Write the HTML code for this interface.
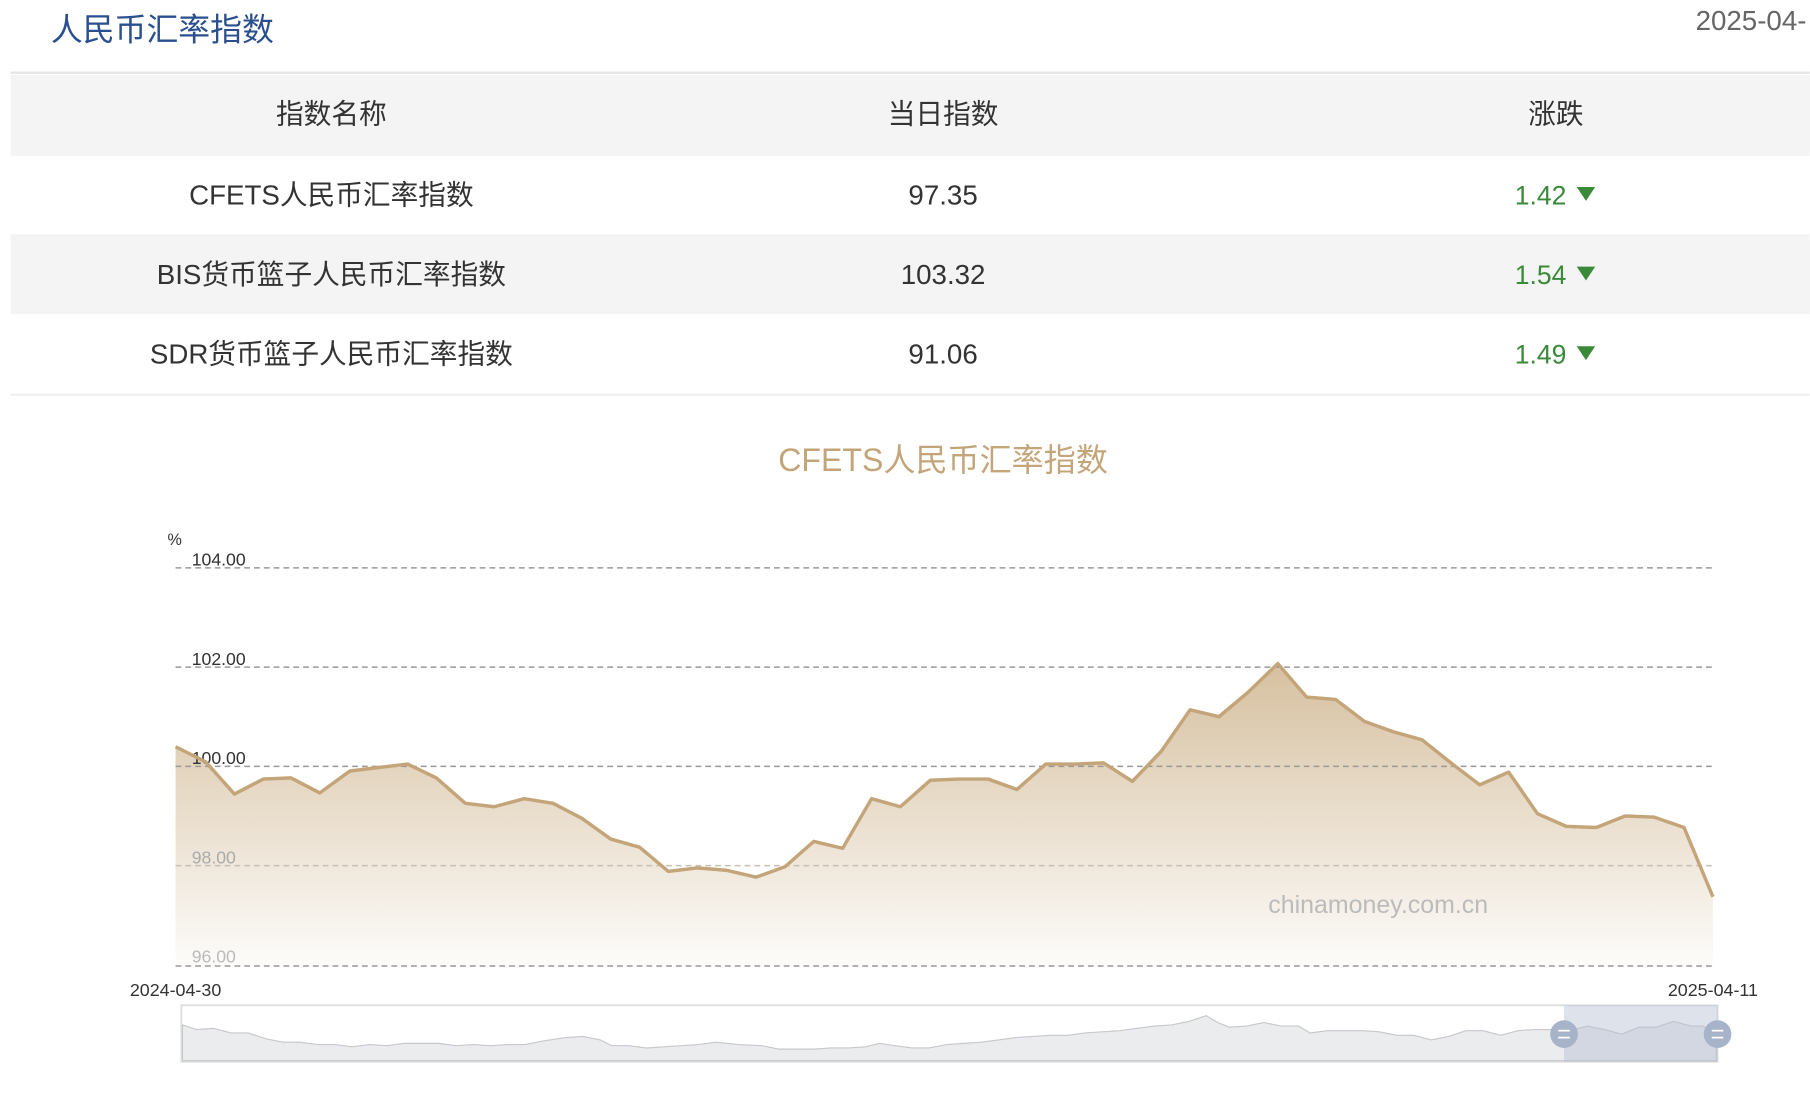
<!DOCTYPE html>
<html><head><meta charset="utf-8"><style>
html,body{margin:0;padding:0;background:#fff;width:1810px;height:1108px;overflow:hidden}
svg{display:block}
text{font-family:"Liberation Sans","Noto Sans CJK SC",sans-serif}
</style></head><body>
<svg width="1810" height="1108" viewBox="0 0 1568 960" xmlns="http://www.w3.org/2000/svg">
<defs>
<linearGradient id="g" x1="0" y1="0" x2="0" y2="1">
<stop offset="0" stop-color="#d4bd9b" stop-opacity="0.95"/>
<stop offset="1" stop-color="#d4bd9b" stop-opacity="0.05"/>
</linearGradient>
</defs>
<text x="44" y="35" font-size="27.6" fill="#2a4f8f">人民币汇率指数</text>
<text x="1469" y="26" font-size="24" fill="#666">2025-04-</text>
<rect x="9" y="62" width="1559" height="2" fill="#e6e6e6"/>
<rect x="9" y="65" width="1559" height="70" fill="#f4f4f4"/>
<rect x="9" y="203" width="1559" height="69" fill="#f4f4f4"/>
<rect x="9" y="341" width="1559" height="2" fill="#f0f0f0"/>
<g font-size="24" fill="#333" text-anchor="middle">
<text x="287" y="107">指数名称</text><text x="817" y="107">当日指数</text><text x="1348" y="107">涨跌</text>
<text x="287" y="177">CFETS人民币汇率指数</text><text x="817" y="177">97.35</text>
<text x="287" y="246">BIS货币篮子人民币汇率指数</text><text x="817" y="246">103.32</text>
<text x="287" y="315">SDR货币篮子人民币汇率指数</text><text x="817" y="315">91.06</text>
</g>
<g font-size="23" fill="#3a8a3a" text-anchor="end">
<text x="1357" y="177">1.42</text><text x="1357" y="246">1.54</text><text x="1357" y="315">1.49</text>
</g>
<g fill="#3a8a3a">
<path d="M1366 162h16l-8 12z"/><path d="M1366 231h16l-8 12z"/><path d="M1366 300h16l-8 12z"/>
</g>
<text x="817" y="408" font-size="27.8" fill="#c4a57a" text-anchor="middle">CFETS人民币汇率指数</text>
<text x="145" y="472" font-size="14" fill="#333">%</text>
<path d="M152 647L178 660L203 688L228 675L252 674L277 687L303 668L328 665L353 662L378 674L403 696L428 699L454 692L479 696L504 709L529 727L554 734L579 755L604 752L629 754L655 760L680 751L705 729L730 735L755 692L780 699L806 676L831 675L856 675L881 684L906 662L931 662L956 661L981 677L1006 651L1031 615L1056 621L1081 600L1107 575L1132 604L1157 606L1182 625L1207 634L1232 641L1257 661L1282 680L1307 669L1332 705L1357 716L1383 717L1408 707L1433 708L1459 717L1484 777L1484 837L152 837Z" fill="url(#g)"/>
<g stroke="#999" stroke-width="1.3" stroke-dasharray="5 3.5">
<line x1="152" y1="492" x2="1484" y2="492"/><line x1="152" y1="578" x2="1484" y2="578"/><line x1="152" y1="664" x2="1484" y2="664"/><line x1="152" y1="750" x2="1484" y2="750" stroke="#c8bfb3"/><line x1="152" y1="837" x2="1484" y2="837"/>
</g>
<g font-size="15.3">
<text x="166" y="490" fill="#333">104.00</text><text x="166" y="576" fill="#333">102.00</text><text x="166" y="662" fill="#333">100.00</text><text x="166" y="748" fill="#aaa">98.00</text><text x="166" y="834" fill="#bbb">96.00</text>
</g>
<path d="M152 647L178 660L203 688L228 675L252 674L277 687L303 668L328 665L353 662L378 674L403 696L428 699L454 692L479 696L504 709L529 727L554 734L579 755L604 752L629 754L655 760L680 751L705 729L730 735L755 692L780 699L806 676L831 675L856 675L881 684L906 662L931 662L956 661L981 677L1006 651L1031 615L1056 621L1081 600L1107 575L1132 604L1157 606L1182 625L1207 634L1232 641L1257 661L1282 680L1307 669L1332 705L1357 716L1383 717L1408 707L1433 708L1459 717L1484 777" fill="none" stroke="#c4a57a" stroke-width="3" stroke-linejoin="round"/>
<text x="1194" y="791" font-size="21.6" fill="#bbb" text-anchor="middle">chinamoney.com.cn</text>
<g font-size="15.5" fill="#333" text-anchor="middle"><text x="152" y="863">2024-04-30</text><text x="1484" y="863">2025-04-11</text></g>
<rect x="157" y="871" width="1331" height="49" fill="#fff" stroke="#ddd" stroke-width="1.5"/>
<path d="M158 888L170 892L185 891L200 895L215 895L230 900L245 903L260 903L275 905L290 905L305 907L320 905L335 906L350 904L365 904L380 904L395 906L410 905L425 906L440 905L455 905L470 902L490 899L505 898L520 901L530 906L545 906L560 908L575 907L590 906L605 905L620 903L640 905L660 906L675 909L690 909L705 909L720 908L735 908L750 907L762 904L775 906L790 908L805 908L820 905L835 904L850 903L865 901L880 899L895 898L910 897L925 897L940 895L955 894L970 893L985 891L1000 889L1015 888L1030 885L1045 880L1055 886L1065 890L1080 889L1095 886L1110 889L1125 889L1135 895L1150 893L1165 893L1180 893L1195 894L1210 897L1225 897L1240 901L1255 898L1270 893L1285 893L1300 897L1315 893L1330 892L1345 892L1360 893L1375 889L1390 892L1405 896L1420 890L1435 890L1450 885L1465 889L1475 889L1487 895L1487 919L158 919Z" fill="#ebecee" stroke="#c8c8cc" stroke-width="1"/>
<rect x="1355" y="871" width="133" height="49" fill="#b4bfd2" fill-opacity="0.45"/>
<circle cx="1355" cy="896" r="12" fill="#a7b3c9"/><circle cx="1488" cy="896" r="12" fill="#a7b3c9"/>
<g stroke="#fff" stroke-width="1.5"><line x1="1350" y1="893" x2="1360" y2="893"/><line x1="1350" y1="899" x2="1360" y2="899"/><line x1="1483" y1="893" x2="1493" y2="893"/><line x1="1483" y1="899" x2="1493" y2="899"/></g>
</svg>
</body></html>
